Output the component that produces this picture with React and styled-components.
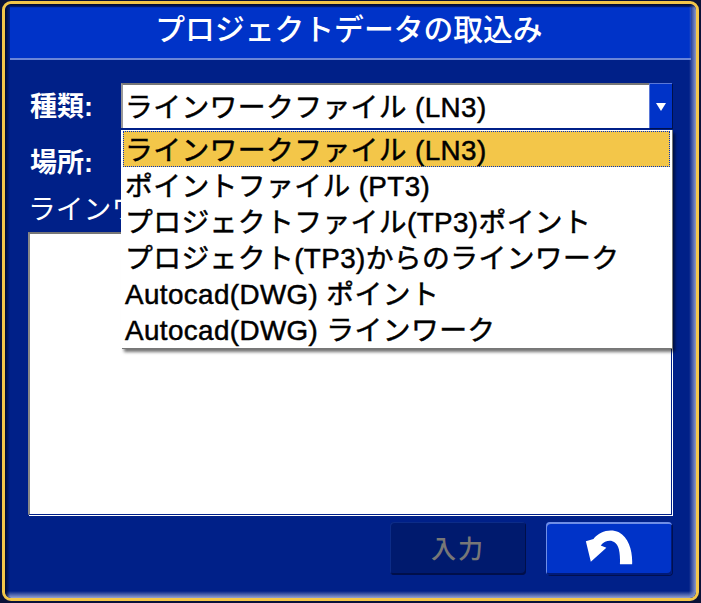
import React from "react";
import styled, { createGlobalStyle } from "styled-components";

const Global = createGlobalStyle`
  html, body { margin: 0; padding: 0; background: #0a1238; }
  body { font-family: "Liberation Sans", "Noto Sans CJK JP", sans-serif; }
`;
const Page = styled.div`
  width: 701px; height: 603px; box-sizing: border-box;
  padding: 1px 2px 2px 2px; overflow: hidden; background: #0a1238;
`;
const Frame = styled.div`
  box-sizing: border-box; width: 697px; height: 600px;
  border: 3px solid #f3c649; border-radius: 9px; overflow: hidden;
  background: #002088; display: flex; flex-direction: column; position: relative;
`;
const EdgeGlow = styled.div`
  position: absolute; inset: 0; pointer-events: none; border-radius: 6px;
  background:
    linear-gradient(90deg, #00092e 0, rgba(0,32,136,0) 5px) left/8px 100% no-repeat,
    linear-gradient(180deg, #00092e 0, rgba(0,32,136,0) 4px) top/100% 6px no-repeat,
    linear-gradient(270deg, #8a97c8 0, rgba(0,32,136,0) 7px) right/8px 100% no-repeat,
    linear-gradient(0deg, #95a2cf 0, rgba(0,32,136,0) 7px) bottom/100% 8px no-repeat;
  z-index: 1;
`;
const Header = styled.div`
  margin: 3px 5px 0 5px; height: 53px; box-sizing: border-box;
  background: #0033c8; border-bottom: 2px solid #6a85d8;
  display: flex; align-items: center; justify-content: center;
  color: #fff; font-size: 29.8px; font-weight: 500; line-height: 1; padding: 0 3px 5px 0; flex: none;
`;
const Body = styled.div`
  flex: 1; display: flex; flex-direction: column; padding: 23px 24px 0 23px; min-height: 0;
`;
const Row = styled.div`
  display: flex; align-items: center; height: ${p => p.$h}px; margin-bottom: ${p => p.$mb || 0}px;
  position: relative;
`;
const Label = styled.div`
  width: 93px; flex: none; color: #fff; font-size: 27px; font-weight: 700; line-height: 1;
  padding: 3px 0 0 2px; box-sizing: border-box;
`;
const Select = styled.div`
  flex: 1; height: 100%; display: flex; background: #fff; position: relative;
  border-top: 2px solid #777; border-left: 2px solid #999; box-sizing: border-box;
`;
const SelectValue = styled.div`
  flex: 1; display: flex; align-items: center; padding: 3px 0 0 2px; line-height: 1;
  font-size: 27.8px; letter-spacing: 0.4px; -webkit-text-stroke: 0.5px #000; color: #000; white-space: pre;
`;
const Arrow = styled.div`
  width: 23px; background: #0033c8; margin-top: -2px; flex: none;
  display: flex; align-items: center; justify-content: center;
  box-shadow: inset 1px 1px 0 #5a78d8, 1px 1px 0 #00114a; padding-top: 2px;
`;
const Tri = styled.div`
  width: 0; height: 0; border-left: 5px solid transparent; border-right: 5px solid transparent; border-top: 8px solid #fff;
`;
const Menu = styled.ul`
  position: absolute; left: 93px; top: 46px; width: 551px; height: 219px; box-sizing: border-box;
  margin: 0; padding: 1px 2px 0 2px; list-style: none; background: #fff; z-index: 5;
  border-top: 1px solid #001f88;
  box-shadow: 1px 1px 0 #777, 3px 4px 3px rgba(0,0,0,.55);
`;
const Option = styled.li`
  height: 36px; box-sizing: border-box; display: flex; align-items: center; padding: 4px 0 0 2px; line-height: 1;
  font-size: 27.8px; letter-spacing: 0.4px; -webkit-text-stroke: 0.5px #000; color: #000; white-space: pre;
  background: ${p => (p.$on ? "#f3c649" : "transparent")};
  outline: ${p => (p.$on ? "1px dotted #0033c8" : "none")}; outline-offset: -1px;
`;
const ThinLabel = styled.div`
  color: #fff; font-size: 27.8px; line-height: 1; padding: 2px 0 0 0; box-sizing: border-box; height: 47px; display: flex; align-items: center; white-space: pre;
`;
const ListBox = styled.div`
  height: 283px; width: 644px; flex: none; box-sizing: border-box; background: #fff;
  border-top: 2px solid #777; border-left: 2px solid #888;
  border-right: 1px solid #001f88; border-bottom: 1px solid #001f88;
  box-shadow: 1px 1px 0 #fff;
`;
const Footer = styled.div`
  display: flex; justify-content: flex-end; gap: 20px; margin-top: 7px;
`;
const Btn = styled.div`
  width: ${p => p.$w}px; height: 53px; box-sizing: border-box; border-radius: 4px; padding-bottom: 3px;
  display: flex; align-items: center; justify-content: center;
  background: ${p => (p.$off ? "#001a6e" : "#0033c8")};
  color: #777; font-size: 25px; font-weight: 500; letter-spacing: 2px;
  box-shadow: ${p => (p.$off
    ? "inset 1px 1px 0 #0c2c88, inset -1px -2px 0 #000f4a"
    : "inset 1px 2px 0 #6f8ee6, inset -1px -2px 0 #001a78, 1px 1px 0 #001050")};
`;

const opts = [
  "ラインワークファイル (LN3)",
  "ポイントファイル (PT3)",
  "プロジェクトファイル(TP3)ポイント",
  "プロジェクト(TP3)からのラインワーク",
  "Autocad(DWG) ポイント",
  "Autocad(DWG) ラインワーク",
];

export default function App() {
  return (
    <Page>
      <Global />
      <Frame>
        <EdgeGlow />
        <Header>プロジェクトデータの取込み</Header>
        <Body>
          <Row $h={45} $mb={11}>
            <Label>種類:</Label>
            <Select>
              <SelectValue>{opts[0]}</SelectValue>
              <Arrow><Tri /></Arrow>
            </Select>
            <Menu>
              {opts.map((o, i) => <Option key={o} $on={i === 0}>{o}</Option>)}
            </Menu>
          </Row>
          <Row $h={46}>
            <Label>場所:</Label>
          </Row>
          <ThinLabel>ラインワークファイル</ThinLabel>
          <ListBox />
          <Footer>
            <Btn $w={136} $off>入力</Btn>
            <Btn $w={126}>
              <svg width="50" height="38" viewBox="130 55 150 115">
                <path fill="#fff" d="M135 95 L150 157 L197 115 L180 108 C190 95 205 92 215 95 C232 100 240 120 238 165 L275 165 C277 125 265 85 235 68 C210 55 175 65 158 88 Z" />
              </svg>
            </Btn>
          </Footer>
        </Body>
      </Frame>
    </Page>
  );
}
